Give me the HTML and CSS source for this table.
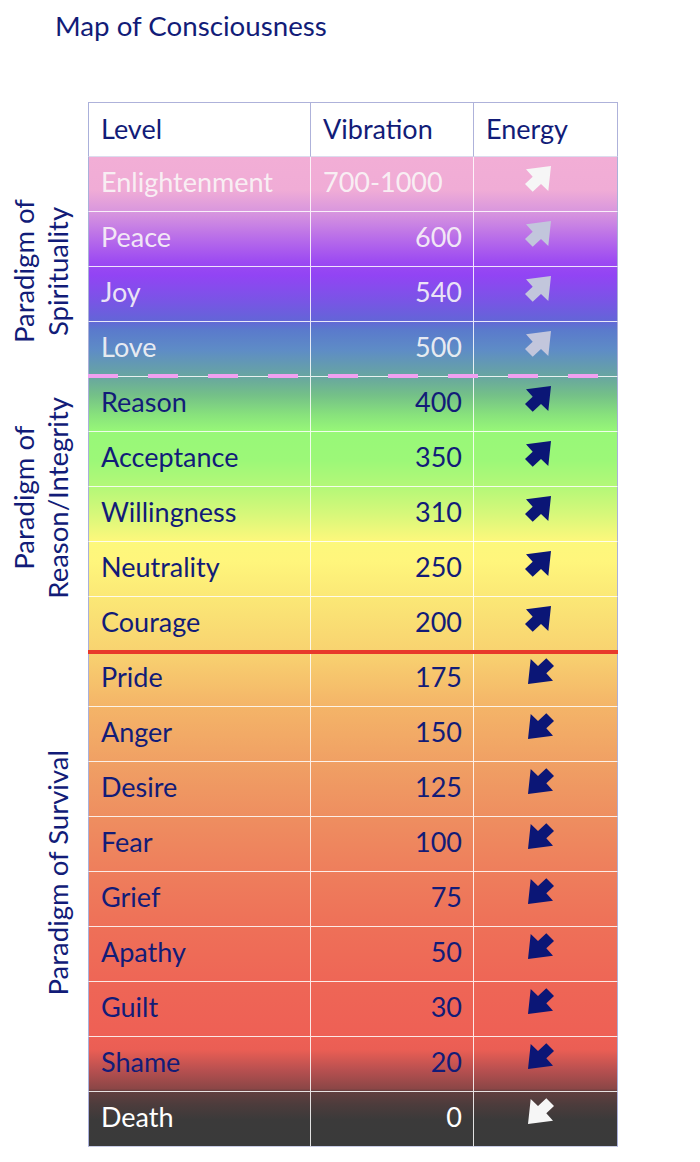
FILE: index.html
```html
<!DOCTYPE html>
<html lang="en">
<head>
<meta charset="utf-8">
<title>Map of Consciousness</title>
<link rel="stylesheet" href="styles.css">
</head>
<body>
<svg width="0" height="0" class="defs" aria-hidden="true">
  <defs>
    <polygon id="arrow-up" points="26,0 23.3,25 16,18 7.7,25.7 0,18 7.7,10.7 1,3.3"/>
  </defs>
</svg>
<h1 class="title">Map of Consciousness</h1>
<div class="chart">
  <table class="map">
    <colgroup>
      <col class="c-para"><col class="c-lvl"><col class="c-vib"><col class="c-en">
    </colgroup>
    <thead>
      <tr>
        <th class="para"></th>
        <th class="lvl">Level</th>
        <th class="vib">Vibration</th>
        <th class="en">Energy</th>
      </tr>
    </thead>
    <tbody>
      <tr class="light">
        <td class="para p-spirit" rowspan="4"><span class="plabel">Paradigm of<br>Spirituality</span></td>
        <td class="lvl">Enlightenment</td><td class="vib left">700-1000</td>
        <td class="en"><svg class="arr up white" viewBox="0 0 26 26"><use href="#arrow-up"/></svg></td>
      </tr>
      <tr class="light">
        <td class="lvl">Peace</td><td class="vib">600</td>
        <td class="en"><svg class="arr up grey" viewBox="0 0 26 26"><use href="#arrow-up"/></svg></td>
      </tr>
      <tr class="light">
        <td class="lvl">Joy</td><td class="vib">540</td>
        <td class="en"><svg class="arr up grey" viewBox="0 0 26 26"><use href="#arrow-up"/></svg></td>
      </tr>
      <tr class="light">
        <td class="lvl">Love</td><td class="vib">500</td>
        <td class="en"><svg class="arr up grey" viewBox="0 0 26 26"><use href="#arrow-up"/></svg></td>
      </tr>
      <tr>
        <td class="para p-reason" rowspan="5"><span class="plabel">Paradigm of<br>Reason/Integrity</span></td>
        <td class="lvl">Reason</td><td class="vib">400</td>
        <td class="en"><svg class="arr up" viewBox="0 0 26 26"><use href="#arrow-up"/></svg></td>
      </tr>
      <tr>
        <td class="lvl">Acceptance</td><td class="vib">350</td>
        <td class="en"><svg class="arr up" viewBox="0 0 26 26"><use href="#arrow-up"/></svg></td>
      </tr>
      <tr>
        <td class="lvl">Willingness</td><td class="vib">310</td>
        <td class="en"><svg class="arr up" viewBox="0 0 26 26"><use href="#arrow-up"/></svg></td>
      </tr>
      <tr>
        <td class="lvl">Neutrality</td><td class="vib">250</td>
        <td class="en"><svg class="arr up" viewBox="0 0 26 26"><use href="#arrow-up"/></svg></td>
      </tr>
      <tr>
        <td class="lvl">Courage</td><td class="vib">200</td>
        <td class="en"><svg class="arr up" viewBox="0 0 26 26"><use href="#arrow-up"/></svg></td>
      </tr>
      <tr class="pride">
        <td class="para p-survival" rowspan="8"><span class="plabel">Paradigm of Survival</span></td>
        <td class="lvl">Pride</td><td class="vib">175</td>
        <td class="en"><svg class="arr down" viewBox="0 0 26 26"><use href="#arrow-up"/></svg></td>
      </tr>
      <tr>
        <td class="lvl">Anger</td><td class="vib">150</td>
        <td class="en"><svg class="arr down" viewBox="0 0 26 26"><use href="#arrow-up"/></svg></td>
      </tr>
      <tr>
        <td class="lvl">Desire</td><td class="vib">125</td>
        <td class="en"><svg class="arr down" viewBox="0 0 26 26"><use href="#arrow-up"/></svg></td>
      </tr>
      <tr>
        <td class="lvl">Fear</td><td class="vib">100</td>
        <td class="en"><svg class="arr down" viewBox="0 0 26 26"><use href="#arrow-up"/></svg></td>
      </tr>
      <tr>
        <td class="lvl">Grief</td><td class="vib">75</td>
        <td class="en"><svg class="arr down" viewBox="0 0 26 26"><use href="#arrow-up"/></svg></td>
      </tr>
      <tr>
        <td class="lvl">Apathy</td><td class="vib">50</td>
        <td class="en"><svg class="arr down" viewBox="0 0 26 26"><use href="#arrow-up"/></svg></td>
      </tr>
      <tr>
        <td class="lvl">Guilt</td><td class="vib">30</td>
        <td class="en"><svg class="arr down" viewBox="0 0 26 26"><use href="#arrow-up"/></svg></td>
      </tr>
      <tr>
        <td class="lvl">Shame</td><td class="vib">20</td>
        <td class="en"><svg class="arr down" viewBox="0 0 26 26"><use href="#arrow-up"/></svg></td>
      </tr>
      <tr class="death">
        <td class="para"></td>
        <td class="lvl">Death</td><td class="vib">0</td>
        <td class="en"><svg class="arr down white" viewBox="0 0 26 26"><use href="#arrow-up"/></svg></td>
      </tr>
    </tbody>
  </table>
  <div class="divider dashed" aria-hidden="true"></div>
  <div class="divider solid" aria-hidden="true"></div>
</div>
</body>
</html>
```
FILE: styles.css
```css
html, body {
  margin: 0;
  padding: 0;
  background: #ffffff;
}

body {
  font-family: "Lato", "Liberation Sans", sans-serif;
  font-weight: 400;
  color: #121c78;
  width: 700px;
}

.defs {
  position: absolute;
  width: 0;
  height: 0;
}

.title {
  margin: 0;
  padding: 9px 0 0 55px;
  height: 102px;
  box-sizing: border-box;
  font-size: 27.7px;
  line-height: 34px;
  font-weight: 400;
  color: #121c78;
}

.chart {
  position: relative;
  width: 618px;
}

.map {
  border-collapse: separate;
  border-spacing: 0;
  table-layout: fixed;
  width: 618px;
  font-size: 27px;
  background: linear-gradient(to bottom,
    #ffffff 0px, #ffffff 55px,
    #f2aed6 55px, #f0acd6 88px, #d896de 110px, #b66aea 138px,
    #9c4af2 160px, #9244f4 173px, #7a54e6 198px, #6464d8 218px,
    #5a7acc 228px, #5e8cc6 248px, #68a6a0 275px, #74c088 293px,
    #88e27c 313px, #98f878 330px, #9cf878 358px, #b4f878 385px,
    #d8f87a 413px, #fcf87c 438px, #fff67c 458px, #fbe876 495px,
    #f8d270 550px, #f4b468 605px, #f0a064 660px, #ee8e60 715px,
    #ee7e5c 770px, #ee7058 825px, #ee6656 880px, #ee6055 933px,
    #ea5e54 948px, #b85050 968px, #8a4646 987px, #623f3f 989px,
    #4c3c3c 1003px, #3b3a3a 1018px, #3a3a3a 1042px);
}

.c-para { width: 88px; }
.c-lvl { width: 223px; }
.c-vib { width: 163px; }
.c-en { width: 144px; }

.map tr {
  height: 55px;
}

.map th,
.map td {
  box-sizing: border-box;
  padding: 0 11px 4px 12px;
  vertical-align: middle;
  text-align: left;
  font-weight: 400;
  line-height: 32px;
  white-space: nowrap;
  border: 0 solid rgba(255, 255, 255, 0.85);
  border-right-width: 1px;
  border-bottom-width: 1px;
}

.map th {
  background: #ffffff;
  padding-bottom: 1px;
  border-top: 1px solid #aeb2da;
  border-right-color: #aeb2da;
  border-bottom-color: #dcdcee;
}

.map .lvl {
  border-left: 1px solid #aab0da;
}

.map td.en {
  border-right-color: #aab0da;
}

.map tr.death td {
  border-bottom-color: #c8cce6;
}

.map .para {
  border: 0;
  background: #ffffff;
  padding: 0;
}

.map td.vib {
  text-align: right;
  padding-right: 11px;
}

.map td.vib.left {
  text-align: left;
}

.map td.en {
  padding: 0;
  vertical-align: top;
}

.light td {
  color: rgba(250, 248, 248, 0.9);
}

.death td {
  color: #ffffff;
}

.arr {
  display: block;
  width: 26px;
  height: 26px;
  fill: #0b1676;
}

.arr.up {
  margin: 9px 0 0 51px;
}

.arr.down {
  margin: 6px 0 0 54px;
  transform: rotate(180deg);
}

.arr.white { fill: #f6f6f6; }
.arr.grey { fill: #c2c6dc; }

.plabel {
  display: inline-block;
  writing-mode: vertical-rl;
  transform: rotate(180deg);
  font-size: 27.5px;
  font-weight: 400;
  line-height: 34px;
  color: #121c78;
  text-align: center;
  white-space: nowrap;
}

.map td.p-spirit { padding: 15px 0 0 7px; }
.map td.p-reason { padding: 0 0 27px 7px; }
.map td.p-survival { padding: 7px 0 0 41px; }

.divider {
  position: absolute;
  left: 88px;
  width: 530px;
  height: 4px;
}

.divider.dashed {
  top: 272px;
  background: repeating-linear-gradient(90deg, #f0a0f0 0 30px, transparent 30px 60px);
}

.divider.solid {
  top: 548px;
  background: #e8392b;
}
```
